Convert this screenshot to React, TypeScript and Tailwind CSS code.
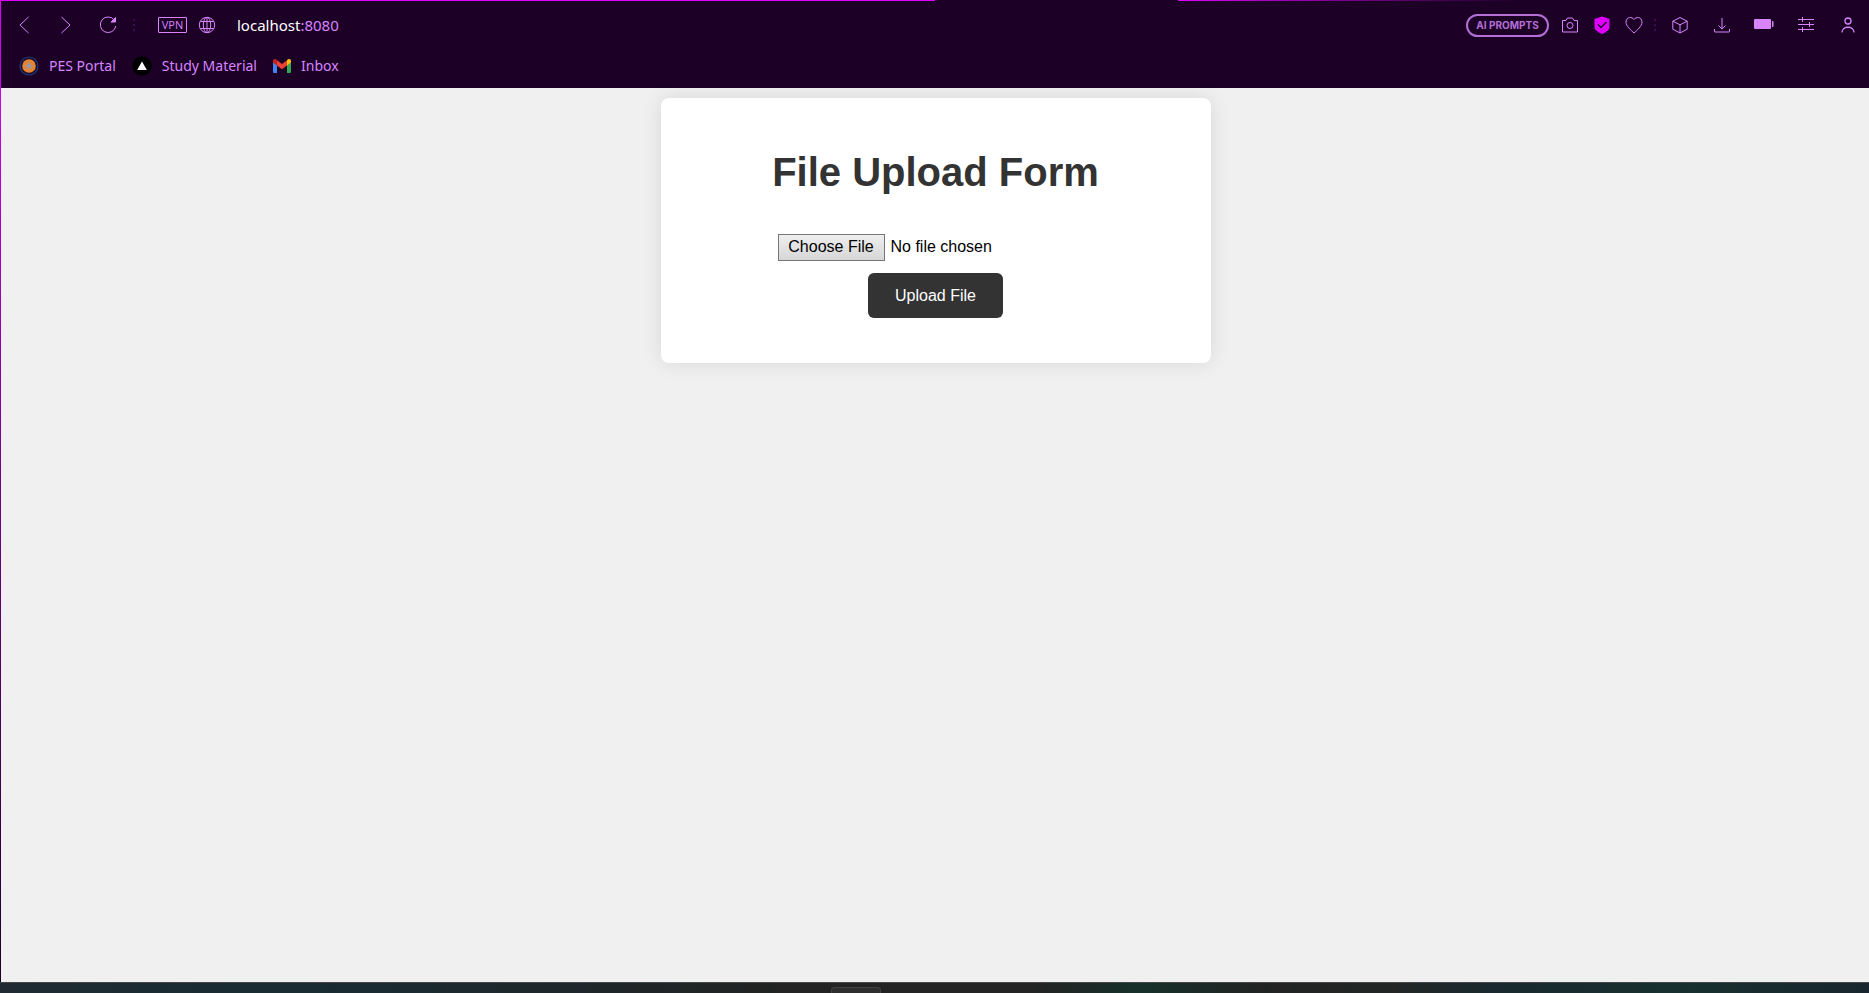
import React from "react";

type IconProps = { className?: string; children: React.ReactNode };

function Icon({ className = "size-5", children }: IconProps) {
  return (
    <svg viewBox="0 0 20 20" className={className} fill="none" stroke="currentColor" aria-hidden="true">
      {children}
    </svg>
  );
}

function Dots() {
  return (
    <svg viewBox="0 0 2 14" className="h-[14px] w-[2px] fill-[#3d0a55]" aria-hidden="true">
      <rect y="1" width="2" height="2" />
      <rect y="6" width="2" height="2" />
      <rect y="11" width="2" height="2" />
    </svg>
  );
}

function ToolButton({ label, children }: { label: string; children: React.ReactNode }) {
  return (
    <button type="button" aria-label={label} className="flex shrink-0 items-center">
      {children}
    </button>
  );
}

function PortalIcon() {
  return (
    <svg viewBox="0 0 20 20" className="size-5" aria-hidden="true">
      <circle cx="10" cy="10" r="9" fill="#1c0d2e" stroke="#1f3c77" strokeWidth="1.2" />
      <circle cx="10" cy="10" r="6.8" fill="#f08122" />
      <g stroke="#9a9aa8" strokeWidth="0.9">
        <path d="M10 4.200v11.600M4.200 10h11.600M6 6l8 8M14 6l-8 8" />
      </g>
      <circle cx="10" cy="10" r="2" fill="#8d9ab8" />
    </svg>
  );
}

function MaterialIcon() {
  return (
    <svg viewBox="0 0 20 20" className="size-5" aria-hidden="true">
      <circle cx="10" cy="10" r="9.8" fill="#000" />
      <path d="M10 5.5l4.8 8.5H5.2z" fill="#fff" />
    </svg>
  );
}

function MailIcon() {
  return (
    <svg viewBox="0 0 18 14" className="h-[14px] w-[18px]" aria-hidden="true">
      <path d="M0 3v9.7C0 13.4.6 14 1.300 14H4V6z" fill="#4285f4" />
      <path d="M18 3v9.700c0 .7-.6 1.300-1.300 1.300H14V6z" fill="#34a853" />
      <path d="M14 1.200V6.500l4-3V1.900C18 .2 16-.6 14.700.5z" fill="#fbbc04" />
      <path d="M4 6.500V1.200l5 3.800 5-3.800v5.300l-5 3.800z" fill="#ea4335" />
      <path d="M0 1.900v1.600l4 3V1.200L3.300.5C2-.6 0 .2 0 1.900z" fill="#c5221f" />
    </svg>
  );
}

function Bookmark({ icon, children }: { icon: React.ReactNode; children: React.ReactNode }) {
  return (
    <a href="#" className="flex items-center gap-2.5">
      {icon}
      <span>{children}</span>
    </a>
  );
}

function Toolbar() {
  return (
    <div className="flex h-12 items-center justify-between pr-[11px] pl-[13px]">
      <div className="flex items-center">
        <div className="flex items-center gap-[22px]">
          <ToolButton label="Back">
            <Icon>
              <path d="M14.500 2L6 10l8.500 8" />
            </Icon>
          </ToolButton>
          <ToolButton label="Forward">
            <Icon>
              <path d="M5.500 2l8.500 8-8.500 8" />
            </Icon>
          </ToolButton>
          <ToolButton label="Reload">
            <Icon>
              <path d="M16.500 5.300A7.800 7.800 0 1 0 17.800 11" />
              <path d="M17.500 2.500v4.500h-4.500z" fill="currentColor" />
            </Icon>
          </ToolButton>
        </div>
        <div className="pr-[23px] pl-[15px]">
          <Dots />
        </div>
        <div className="flex items-center gap-2.5">
          <button
            type="button"
            className="h-4 w-[29px] rounded-[1px] border border-current text-center font-['Open_Sans',sans-serif] text-[11px] leading-[14px]"
          >
            VPN
          </button>
          <ToolButton label="Site information">
            <Icon>
              <circle cx="10" cy="10" r="7.700" />
              <ellipse cx="10" cy="10" rx="3.700" ry="7.700" />
              <path d="M3.500 6.500h13M3.500 13.500h13M10 2.500v15" />
            </Icon>
          </ToolButton>
        </div>
        <a href="#" className="ml-5 text-[15px] leading-5">
          <span className="text-white">localhost</span>:8080
        </a>
      </div>
      <div className="flex items-center">
        <button
          type="button"
          className="mr-[11px] h-[23px] w-[83px] rounded-full border-2 border-[#b46fd6] text-center font-[Inter,sans-serif] text-[10px] leading-4 font-bold text-[#b46fd6]"
        >
          AI PROMPTS
        </button>
        <div className="flex items-center gap-3">
          <ToolButton label="Snapshot">
            <Icon>
              <path d="M2.500 5.500h3.500l1.500-2.500h5l1.500 2.500h3.500v11.500h-15z" />
              <circle cx="10" cy="10.500" r="3" />
            </Icon>
          </ToolButton>
          <ToolButton label="Ad blocker">
            <svg viewBox="0 0 20 20" className="size-5" aria-hidden="true">
              <path d="M10 1.500l7.500 2.500v8c0 3-4 5.500-7.500 7-3.500-1.500-7.500-4-7.500-7V4z" fill="#e000ff" />
              <path d="M6 9.500l3 3 5.500-5.500" fill="none" stroke="#1c0026" strokeWidth="1.500" />
            </svg>
          </ToolButton>
          <ToolButton label="Add to favourites">
            <Icon>
              <path d="M10 4.500C8 1.500 2.500 1.500 2 7c0 4.500 5 8 8 11 3-3 8-6.500 8-11-.5-5.500-6-5.500-8-2.500z" />
            </Icon>
          </ToolButton>
        </div>
        <div className="pr-[14px] pl-[10px]">
          <Dots />
        </div>
        <div className="flex items-center gap-[22px]">
          <ToolButton label="Extensions">
            <Icon>
              <path d="M10 2.500l7.200 3.700v8L10 18l-7.200-3.800v-8zM2.800 6.200L10 9.800l7.200-3.600M10 9.800V18" />
            </Icon>
          </ToolButton>
          <ToolButton label="Downloads">
            <Icon>
              <path d="M10 3v11M6.500 10.500L10 14l3.500-3.500M2.500 14v2.500q0 .5.500.5h14q.5 0 .5-.5V14" />
            </Icon>
          </ToolButton>
          <ToolButton label="Battery">
            <Icon>
              <rect x="0" y="4" width="17" height="10" rx="1" fill="currentColor" stroke="none" />
              <path d="M18 6h.5q1 0 1 1v4q0 1-1 1H18z" fill="currentColor" stroke="none" />
            </Icon>
          </ToolButton>
          <ToolButton label="Easy setup">
            <Icon>
              <path d="M2 4.500h16M2 9.500h16M2 14.500h16M6.500 2v5M13.500 7v5M6.500 12v5" />
            </Icon>
          </ToolButton>
          <ToolButton label="Profile">
            <Icon>
              <circle cx="10" cy="6" r="3" strokeWidth="1.300" />
              <path d="M4 17.500c0-7 12-7 12 0" strokeWidth="1.300" />
            </Icon>
          </ToolButton>
        </div>
      </div>
    </div>
  );
}

function BrowserChrome() {
  return (
    <header className="bg-[#1c0026] font-['Noto_Sans',sans-serif] text-[#d884ff]">
      <div className="flex h-px">
        <div className="w-1/2 bg-[#e000ff]" />
        <div className="w-[13%]" />
        <div className="flex-1 bg-linear-to-r from-[#e000ff] to-[#1c0026] to-50%" />
      </div>
      <Toolbar />
      <nav className="flex h-[39px] items-start gap-4 pt-[7px] pl-[18px] text-sm leading-5">
        <Bookmark icon={<PortalIcon />}>PES Portal</Bookmark>
        <Bookmark icon={<MaterialIcon />}>Study Material</Bookmark>
        <Bookmark icon={<MailIcon />}>Inbox</Bookmark>
      </nav>
    </header>
  );
}

function UploadForm() {
  return (
    <section className="mx-auto w-full max-w-[550px] rounded-lg bg-white px-5 pt-[50px] pb-[45px] shadow-[0_0_20px_rgba(0,0,0,0.1)]">
      <h1 className="text-center text-[40px] leading-[48px] font-bold text-[#333]">File Upload Form</h1>
      <form className="mt-[38px] flex flex-col items-center gap-3" onSubmit={(e) => e.preventDefault()}>
        <input
          type="file"
          name="file"
          aria-label="File to upload"
          className="h-[27px] w-[316px] text-base leading-6 text-black file:mr-[6px] file:h-[27px] file:w-[107px] file:border file:border-solid file:border-[#767676] file:bg-linear-to-b file:from-[#efefef] file:to-[#d6d6d6] file:pb-[2px] file:text-center"
        />
        <button type="submit" className="h-[45px] w-[135px] rounded-md bg-[#333] text-base text-white">
          Upload File
        </button>
      </form>
    </section>
  );
}

export default function App() {
  return (
    <div className="flex min-h-screen flex-col bg-[#f0f0f0] font-['Liberation_Sans',Arial,sans-serif]">
      <div className="flex flex-1">
        <div className="w-px bg-linear-to-b from-[#e000ff] to-[#1c0026]" />
        <div className="flex flex-1 flex-col">
          <BrowserChrome />
          <main className="flex-1 pt-[10px] pr-5 pl-[21px]">
            <UploadForm />
          </main>
        </div>
      </div>
      <footer className="flex h-[11px] justify-center border-t border-[#45474a] bg-[linear-gradient(to_right,#1f2a33,#182c31_15%,#1b2a31_22%,#222322_42%,#222322_55%,#16302a_61%,#222322_68%,#222726_75%,#19292f_80%,#17302f_90%,#19262f)]">
        <div className="mt-1 mr-[158px] h-[6px] w-[50px] rounded-t border border-b-0 border-[#414141] bg-[#2d2d2d]" />
      </footer>
    </div>
  );
}
